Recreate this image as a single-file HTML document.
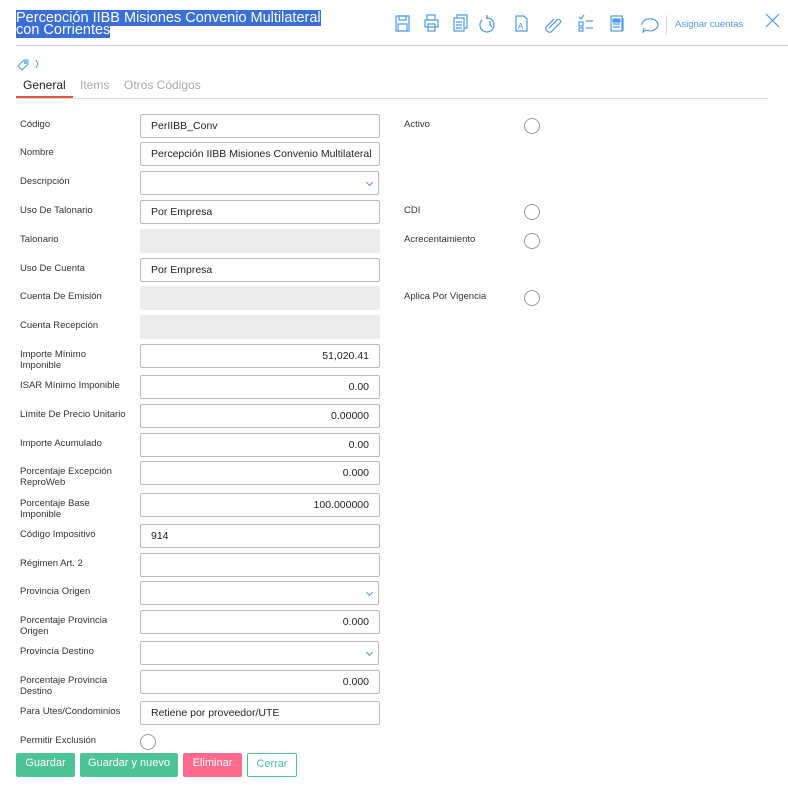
<!DOCTYPE html>
<html><head><meta charset="utf-8"><style>
*{box-sizing:border-box;margin:0;padding:0}
body{width:788px;height:785px;background:#fff;font-family:"Liberation Sans",sans-serif;position:relative;overflow:hidden;color:#333}
.a{position:absolute}
.t{left:16px;top:12px;font-size:14.5px;line-height:12px;color:#fff}
.t span{background:#3a6fd6;}
.lbl{position:absolute;left:20px;font-size:9.5px;line-height:11px;color:#333;width:118px}
.rl{left:404px}
.in{position:absolute;left:140px;width:240px;height:24px;border:1px solid #bbb;border-radius:2px;font-size:10.5px;padding:0 10px;line-height:23px;color:#222;white-space:nowrap;overflow:hidden}
.r{text-align:right}
.g{background:#ececec;border-color:#ececec}
.sel{width:239px}
.sel:after{content:"";position:absolute;right:6px;top:8px;width:4px;height:4px;border-right:1px solid #4a90e2;border-bottom:1px solid #4a90e2;transform:rotate(45deg)}
.c{position:absolute;width:16px;height:16px;border:1px solid #999;border-radius:50%}
.btn{position:absolute;top:753px;height:24px;border-radius:2px;font-size:11px;color:#fff;text-align:center;line-height:21px}
</style></head><body>
<div class="a t"><span>Percepción IIBB Misiones Convenio Multilateral </span><br><span>con Corrientes</span></div>
<div class="a" style="left:16px;top:45px;width:772px;height:1px;background:#ccc"></div>
<svg class="a" style="left:392px;top:12px" width="290" height="24" fill="none" stroke="#4a9be8" stroke-width="1.2">
<rect x="4" y="4" width="13" height="15"/><rect x="7" y="4" width="7" height="4"/><rect x="6" y="12" width="9" height="7"/>
<rect x="35" y="3" width="8" height="5"/><rect x="33" y="8" width="13" height="7"/><rect x="36" y="12" width="7" height="7"/>
<rect x="62" y="6" width="10" height="13"/><path d="M65 6V3h10v13h-3M64 10h6M64 13h6M64 16h6"/>
<path d="M94 6a7 7 0 1 1-4 2M95 3v4M98 9v4l2 2"/>
<path d="M124 4h8l3 3v12h-11z"/><text x="126" y="17" font-size="8" fill="#4a9be8" stroke="none" font-family="Liberation Sans">A</text>
<path d="M157 16l8-8a2 2 0 0 1 3 3l-9 9a4 4 0 0 1-5-5l8-8"/>
<path d="M187 5l2 2 3-4M187 10h4v4h-4zM187 16h4v3h-4zM194 9h7M194 16h7"/>
<rect x="219" y="4" width="11" height="15"/><rect x="221" y="7" width="7" height="3" fill="#4a9be8"/><path d="M221 12h7M221 15h7M231 6v13"/>
<path d="M250 13a8 6 0 1 1 4 5l-3 2 1-4"/>
</svg>
<div class="a" style="left:666px;top:15px;width:1px;height:20px;background:#ddd"></div>
<div class="a" style="left:675px;top:19px;font-size:9.5px;color:#4a9be8">Asignar cuentas</div>
<svg class="a" style="left:765px;top:13px" width="15" height="15" stroke="#4a9be8" stroke-width="1.2"><path d="M1 1l13 13M14 1L1 14"/></svg>
<svg class="a" style="left:16px;top:58px" width="28" height="14" fill="none" stroke="#4a9be8" stroke-width="1"><path d="M2 8l6-6h4v4l-6 6z"/><circle cx="9.5" cy="4.5" r="1"/><path d="M20 2l2 4-2 4"/></svg>
<div class="a" style="left:23px;top:78px;font-size:12px;color:#222">General</div>
<div class="a" style="left:80px;top:78px;font-size:12px;color:#aaa">Items</div>
<div class="a" style="left:124px;top:78px;font-size:12px;color:#aaa">Otros Códigos</div>
<div class="a" style="left:16px;top:98px;width:752px;height:1px;background:#ddd"></div>
<div class="a" style="left:16px;top:96px;width:57px;height:2px;background:#e5533d"></div>

<div class="lbl" style="top:119px">Código</div><div class="in" style="top:114px">PerIIBB_Conv</div>
<div class="lbl" style="top:147px">Nombre</div><div class="in" style="top:142px">Percepción IIBB Misiones Convenio Multilateral</div>
<div class="lbl" style="top:176px">Descripción</div><div class="in sel" style="top:171px"></div>
<div class="lbl" style="top:205px">Uso De Talonario</div><div class="in" style="top:200px">Por Empresa</div>
<div class="lbl" style="top:234px">Talonario</div><div class="in g" style="top:229px"></div>
<div class="lbl" style="top:263px">Uso De Cuenta</div><div class="in" style="top:258px">Por Empresa</div>
<div class="lbl" style="top:291px">Cuenta De Emisión</div><div class="in g" style="top:286px"></div>
<div class="lbl" style="top:320px">Cuenta Recepción</div><div class="in g" style="top:315px"></div>
<div class="lbl" style="top:349px">Importe Mínimo<br>Imponible</div><div class="in r" style="top:344px">51,020.41</div>
<div class="lbl" style="top:380px">ISAR Mínimo Imponible</div><div class="in r" style="top:375px">0.00</div>
<div class="lbl" style="top:409px">Límite De Precio Unitario</div><div class="in r" style="top:404px">0.00000</div>
<div class="lbl" style="top:438px">Importe Acumulado</div><div class="in r" style="top:433px">0.00</div>
<div class="lbl" style="top:466px">Porcentaje Excepción ReproWeb</div><div class="in r" style="top:461px">0.000</div>
<div class="lbl" style="top:498px">Porcentaje Base<br>Imponible</div><div class="in r" style="top:493px">100.000000</div>
<div class="lbl" style="top:529px">Código Impositivo</div><div class="in" style="top:524px">914</div>
<div class="lbl" style="top:558px">Régimen Art. 2</div><div class="in" style="top:553px"></div>
<div class="lbl" style="top:586px">Provincia Origen</div><div class="in sel" style="top:581px"></div>
<div class="lbl" style="top:615px">Porcentaje Provincia Origen</div><div class="in r" style="top:610px">0.000</div>
<div class="lbl" style="top:646px">Provincia Destino</div><div class="in sel" style="top:641px"></div>
<div class="lbl" style="top:675px">Porcentaje Provincia Destino</div><div class="in r" style="top:670px">0.000</div>
<div class="lbl" style="top:706px">Para Utes/Condominios</div><div class="in" style="top:701px">Retiene por proveedor/UTE</div>
<div class="lbl" style="top:735px">Permitir Exclusión</div><div class="c" style="left:140px;top:734px"></div>

<div class="lbl rl" style="top:119px">Activo</div><div class="c" style="left:524px;top:118px"></div>
<div class="lbl rl" style="top:205px">CDI</div><div class="c" style="left:524px;top:204px"></div>
<div class="lbl rl" style="top:234px">Acrecentamiento</div><div class="c" style="left:524px;top:233px"></div>
<div class="lbl rl" style="top:291px">Aplica Por Vigencia</div><div class="c" style="left:524px;top:290px"></div>

<div class="btn" style="left:16px;width:59px;background:#4cc495">Guardar</div>
<div class="btn" style="left:80px;width:98px;background:#4cc495">Guardar y nuevo</div>
<div class="btn" style="left:183px;width:59px;background:#ff6b8f">Eliminar</div>
<div class="btn" style="left:247px;width:50px;border:1px solid #4cc495;color:#4cc495">Cerrar</div>
</body></html>
